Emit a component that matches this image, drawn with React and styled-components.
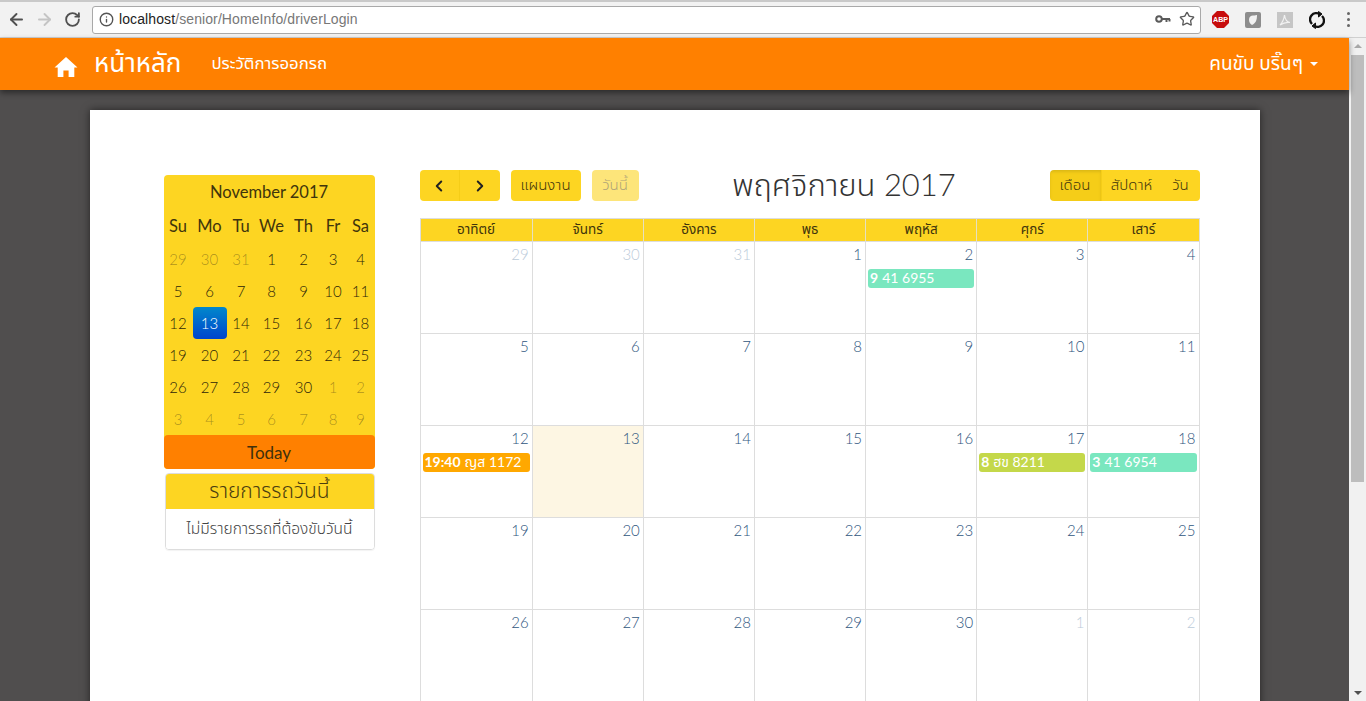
import React from 'react';
import styled, { createGlobalStyle } from 'styled-components';
import { ArrowLeft, ArrowRight, RotateCw, Info, Star, ChevronLeft, ChevronRight } from 'lucide-react';

const YELLOW = '#fdd522';
const ORANGE = '#ff8000';
const FONT = '"Lato", "Noto Sans", "Noto Sans Thai", "Open Sans", "Liberation Sans", sans-serif';

const Global = createGlobalStyle`
  html, body { margin: 0; padding: 0; height: 100%; overflow: hidden; }
  body { font-family: ${FONT}; background: #504e4e; }
  * { box-sizing: border-box; }
`;

const Shell = styled.div`
  display: flex;
  flex-direction: column;
  height: 701px;
  width: 1366px;
  overflow: hidden;
`;

const BrowserBar = styled.div`
  height: 38px;
  flex: none;
  background: #f2f2f2;
  border-top: 2px solid #c9c9c9;
  border-bottom: 1px solid #d0d0d0;
  display: flex;
  align-items: center;
  padding: 0 8px 0 6px;
`;

const NavIcons = styled.div`
  display: flex;
  align-items: center;
  gap: 8px;
  width: 86px;
  flex: none;
`;

const NavBtn = styled.span`
  display: flex;
  width: 20px;
  justify-content: center;
  color: ${p => (p.$off ? '#c4c4c4' : '#505050')};
`;

const Omnibox = styled.div`
  width: 1109px;
  height: 28px;
  background: #fff;
  border: 1px solid #a9a9a9;
  border-radius: 3px;
  display: flex;
  align-items: center;
  padding: 0 5px 1px 6px;
  font: 14px "Liberation Sans", sans-serif;
  letter-spacing: 0.1px;
  color: #777;
`;

const UrlHost = styled.span`
  color: #222;
  margin-left: 5px;
`;

const OmniEnd = styled.div`
  margin-left: auto;
  display: flex;
  align-items: center;
  gap: 8px;
  color: #5a5a5a;
`;

const Extensions = styled.div`
  display: flex;
  align-items: center;
  margin-left: 11px;
  gap: 16px;
`;

const Dots = styled.div`
  display: flex;
  flex-direction: column;
  gap: 3px;
  margin-left: 22px;
  span { width: 3px; height: 3px; background: #666; border-radius: 50%; }
`;

const Viewport = styled.div`
  flex: 1;
  min-height: 0;
  display: flex;
`;

const Page = styled.div`
  flex: 1;
  min-width: 0;
  display: flex;
  flex-direction: column;
  background: #504e4e;
`;

const Navbar = styled.nav`
  height: 52px;
  flex: none;
  background: ${ORANGE};
  color: #fff;
  display: flex;
  align-items: center;
  padding: 0 31px 0 54px;
  box-shadow: 0 3px 6px rgba(0, 0, 0, 0.45);
  position: relative;
  z-index: 2;
`;

const Brand = styled.a`
  display: flex;
  align-items: center;
  font-size: 26px;
  gap: 16px;
  svg { margin-top: 6px; }
`;

const NavLink = styled.a`
  font-size: 16.8px;
  margin-left: 30px;
`;

const UserMenu = styled.a`
  margin-left: auto;
  font-size: 19px;
  display: flex;
  align-items: center;
  gap: 7px;
`;

const Caret = styled.span`
  width: 0;
  height: 0;
  border-left: 4px solid transparent;
  border-right: 4px solid transparent;
  border-top: 4px solid #fff;
`;

const Main = styled.main`
  flex: 1;
  min-height: 0;
  padding-top: 20px;
  display: flex;
  justify-content: center;
  align-items: flex-start;
`;

const Card = styled.div`
  width: 1170px;
  height: 640px;
  flex: none;
  background: #fff;
  box-shadow: 0 0 8px rgba(0, 0, 0, 0.55);
  display: flex;
  align-items: flex-start;
  padding: 60px 0 0 74px;
`;

const Sidebar = styled.aside`
  width: 211px;
  flex: none;
  margin-top: 5px;
`;

const Mini = styled.div`
  background: ${YELLOW};
  border-radius: 4px;
  color: #40340c;
`;

const MiniTitle = styled.div`
  height: 33px;
  display: flex;
  align-items: center;
  justify-content: center;
  font-size: 16.5px;
  font-weight: 400;
`;

const MiniGrid = styled.div`
  display: grid;
  grid-template-columns: 29px 34px 29px 32px 32px 27px 28px;
  grid-template-rows: 35px;
  grid-auto-rows: 32px;
`;

const Dow = styled.div`
  display: flex;
  align-items: center;
  justify-content: center;
  font-size: 16.5px;
`;

const MiniDay = styled.div`
  display: flex;
  align-items: center;
  justify-content: center;
  font-size: 15px;
  font-weight: 300;
  border-radius: 4px;
  color: ${p => (p.$active ? '#fff' : p.$muted ? 'rgba(50,42,20,0.42)' : '#2e2608')};
  background: ${p => (p.$active ? 'linear-gradient(#0088cc, #0044cc)' : 'transparent')};
`;

const TodayBar = styled.div`
  height: 34px;
  background: ${ORANGE};
  border-radius: 4px;
  display: flex;
  align-items: center;
  justify-content: center;
  font-size: 17px;
  font-weight: 400;
  color: #40300c;
`;

const Panel = styled.div`
  margin: 4px 0 0 1px;
  border: 1px solid #ddd;
  border-radius: 4px;
  overflow: hidden;
  box-shadow: 0 1px 1px rgba(0, 0, 0, 0.05);
`;

const PanelHead = styled.div`
  height: 35px;
  background: ${YELLOW};
  display: flex;
  align-items: center;
  justify-content: center;
  font-size: 21px;
  font-weight: 300;
  color: #4a3d10;
`;

const PanelBody = styled.div`
  height: 40px;
  background: #fff;
  display: flex;
  align-items: center;
  justify-content: center;
  font-size: 15.5px;
  font-weight: 300;
  color: #444;
`;

const Calendar = styled.section`
  width: 780px;
  flex: none;
  margin-left: 45px;
`;

const Toolbar = styled.div`
  height: 31px;
  display: flex;
  align-items: center;
  margin-bottom: 17px;
  position: relative;
`;

const BtnGroup = styled.div`
  display: flex;
  height: 31px;
  border-radius: 4px;
  overflow: hidden;
  margin-right: ${p => p.$mr || 0}px;
`;

const Btn = styled.button`
  height: 31px;
  width: ${p => p.$w}px;
  border: 0;
  padding: 0;
  font: 300 15px ${FONT};
  color: #40340c;
  background: ${p => (p.$on ? '#f5cd18' : YELLOW)};
  box-shadow: ${p => (p.$on ? 'inset 0 2px 3px rgba(0,0,0,.1)' : 'none')};
  display: flex;
  align-items: center;
  justify-content: center;
  border-left: ${p => (p.$split ? '1px solid #f5cd18' : '0')};
`;

const FadedBtn = styled(Btn)`
  opacity: 0.6;
  border-radius: 4px;
  color: #776520;
`;

const SoloBtn = styled(Btn)`
  border-radius: 4px;
  margin-right: 11px;
`;

const Title = styled.h2`
  flex: 1;
  margin: 0;
  padding-top: 2px;
  text-align: center;
  font-weight: 300;
  font-size: 31px;
  color: #333;
`;

const HeadRow = styled.div`
  display: grid;
  grid-template-columns: repeat(7, 1fr);
  height: 24px;
  background: ${YELLOW};
  border: 1px solid #ddd;
  border-bottom: 1px solid #ddd;
`;

const HeadCell = styled.div`
  display: flex;
  align-items: center;
  justify-content: center;
  font-size: 13.5px;
  color: #40340c;
  border-left: ${p => (p.$first ? '0' : '1px solid #e6e0c0')};
`;

const Weeks = styled.div`
  display: grid;
  grid-template-columns: repeat(7, 1fr);
  grid-auto-rows: 92px;
  border-left: 1px solid #ddd;
  border-right: 1px solid #ddd;
`;

const DayCell = styled.div`
  border-bottom: 1px solid #ddd;
  border-left: ${p => (p.$first ? '0' : '1px solid #ddd')};
  background: ${p => (p.$today ? '#fdf6e3' : '#fff')};
  padding: 2px 2px 0 2px;
`;

const DayNum = styled.div`
  text-align: right;
  font-size: 15px;
  font-weight: 300;
  line-height: 20px;
  padding-right: 1px;
  color: ${p => (p.$muted ? '#bccbda' : '#2f5680')};
`;

const EventChip = styled.div`
  margin-top: 5px;
  height: 19px;
  border-radius: 3px;
  background: ${p => p.$bg};
  color: #fff;
  font-size: 14px;
  font-weight: 400;
  line-height: 18px;
  padding-left: 2px;
  white-space: nowrap;
  overflow: hidden;
  b { font-weight: 700; margin-right: 4px; }
`;

const Scrollbar = styled.div`
  width: 17px;
  flex: none;
  background: #f1f1f1;
  display: flex;
  flex-direction: column;
  align-items: center;
  justify-content: space-between;
  position: relative;
`;

const ScrollArrow = styled.span`
  width: 0;
  height: 0;
  margin: 6px 0;
  border-left: 4px solid transparent;
  border-right: 4px solid transparent;
  ${p => (p.$up ? 'border-bottom: 4px solid #a8a8a8;' : 'border-top: 4px solid #505050;')}
`;

const Thumb = styled.div`
  position: absolute;
  top: 17px;
  left: 2px;
  right: 2px;
  height: 427px;
  background: #bdbdbd;
`;

const Home = () => (
  <svg width="24" height="22" viewBox="0 0 24 22" fill="#fff">
    <path d="M12 1 L23.5 11.5 L20.3 11.5 L20.3 21 L14.6 21 L14.6 14.5 L9.4 14.5 L9.4 21 L3.7 21 L3.7 11.5 L.5 11.5 Z" />
  </svg>
);

const KeyIcon = () => (
  <svg width="16" height="10" viewBox="0 0 16 10" fill="none" stroke="#5a5a5a" strokeWidth="2">
    <circle cx="4" cy="5" r="2.8" />
    <path d="M7 5 H15 M11.5 5 V8 M14.5 5 V7.5" />
  </svg>
);

const Abp = () => (
  <svg width="17" height="17" viewBox="0 0 18 18">
    <path d="M5.3 0 H12.7 L18 5.3 V12.7 L12.7 18 H5.3 L0 12.7 V5.3 Z" fill="#c70d0d" />
    <text x="9" y="11.6" textAnchor="middle" fontSize="7.5" fontWeight="700" fontFamily="Liberation Sans" fill="#fff">ABP</text>
  </svg>
);

const Shield = () => (
  <svg width="16" height="16" viewBox="0 0 16 16">
    <rect width="16" height="16" rx="2" fill="#8d8d8d" />
    <path d="M8 3.5 C10 3.5 12 3 12 3 C12 8 11 11 7 13 C5 12 4 10 4 7.5 C4 5 6 3.5 8 3.5 Z" fill="#f2f2f2" />
  </svg>
);

const Pdf = () => (
  <svg width="16" height="16" viewBox="0 0 16 16">
    <rect width="16" height="16" fill="#c6c6c6" />
    <path d="M3 13 C5 11 7 7 7.5 3 C8 7 10 10 13 10.5 C10 10 6 11 3 13 Z" fill="none" stroke="#f2f2f2" strokeWidth="1.2" />
  </svg>
);

const Sync = () => (
  <svg width="16" height="18" viewBox="0 0 16 18" fill="none" stroke="#111" strokeWidth="2.4">
    <path d="M3 13 A6.3 6.3 0 0 1 11 3.3" />
    <path d="M13 5 A6.3 6.3 0 0 1 5 14.7" />
    <path d="M9.5 0.5 L13 3 L9.5 6 Z" fill="#111" strokeWidth="1" />
    <path d="M6.5 17.5 L3 15 L6.5 12 Z" fill="#111" strokeWidth="1" />
  </svg>
);

const dows = ['Su', 'Mo', 'Tu', 'We', 'Th', 'Fr', 'Sa'];
const miniDays = [29, 30, 31, ...Array.from({ length: 30 }, (_, i) => i + 1), 1, 2, 3, 4, 5, 6, 7, 8, 9];
const thaiDays = ['อาทิตย์', 'จันทร์', 'อังคาร', 'พุธ', 'พฤหัส', 'ศุกร์', 'เสาร์'];
const events = {
  2: { bg: '#7ae7bf', lead: '9', rest: '41 6955' },
  12: { bg: '#ffa800', lead: '19:40', rest: 'ญส 1172' },
  17: { bg: '#c4d84a', lead: '8', rest: 'ฮข 8211' },
  18: { bg: '#7ae7bf', lead: '3', rest: '41 6954' },
};
const monthDays = [29, 30, 31, ...Array.from({ length: 30 }, (_, i) => i + 1), 1, 2];

export default function App() {
  return (
    <Shell>
      <Global />
      <BrowserBar>
        <NavIcons>
          <NavBtn><ArrowLeft size={19} strokeWidth={2.4} /></NavBtn>
          <NavBtn $off><ArrowRight size={19} strokeWidth={2.4} /></NavBtn>
          <NavBtn><RotateCw size={17} strokeWidth={2.6} /></NavBtn>
        </NavIcons>
        <Omnibox>
          <Info size={15} color="#555" strokeWidth={2.2} />
          <UrlHost>localhost</UrlHost>/senior/HomeInfo/driverLogin
          <OmniEnd>
            <KeyIcon />
            <Star size={16} strokeWidth={2} />
          </OmniEnd>
        </Omnibox>
        <Extensions>
          <Abp />
          <Shield />
          <Pdf />
          <Sync />
        </Extensions>
        <Dots><span /><span /><span /></Dots>
      </BrowserBar>
      <Viewport>
        <Page>
          <Navbar>
            <Brand><Home />หน้าหลัก</Brand>
            <NavLink>ประวัติการออกรถ</NavLink>
            <UserMenu>คนขับ บริ๊นๆ <Caret /></UserMenu>
          </Navbar>
          <Main>
            <Card>
              <Sidebar>
                <Mini>
                  <MiniTitle>November 2017</MiniTitle>
                  <MiniGrid>
                    {dows.map(d => <Dow key={d}>{d}</Dow>)}
                    {miniDays.map((d, i) => (
                      <MiniDay key={i} $active={i === 15} $muted={i < 3 || i > 32}>{d}</MiniDay>
                    ))}
                  </MiniGrid>
                  <TodayBar>Today</TodayBar>
                </Mini>
                <Panel>
                  <PanelHead>รายการรถวันนี้</PanelHead>
                  <PanelBody>ไม่มีรายการรถที่ต้องขับวันนี้</PanelBody>
                </Panel>
              </Sidebar>
              <Calendar>
                <Toolbar>
                  <BtnGroup $mr={11}>
                    <Btn $w={39}><ChevronLeft size={18} strokeWidth={2.6} color="#222" /></Btn>
                    <Btn $w={41} $split><ChevronRight size={18} strokeWidth={2.6} color="#222" /></Btn>
                  </BtnGroup>
                  <SoloBtn $w={70}>แผนงาน</SoloBtn>
                  <FadedBtn $w={47}>วันนี้</FadedBtn>
                  <Title>พฤศจิกายน 2017</Title>
                  <BtnGroup>
                    <Btn $w={51} $on>เดือน</Btn>
                    <Btn $w={61} $split>สัปดาห์</Btn>
                    <Btn $w={38}>วัน</Btn>
                  </BtnGroup>
                </Toolbar>
                <HeadRow>
                  {thaiDays.map((d, i) => <HeadCell key={d} $first={i === 0}>{d}</HeadCell>)}
                </HeadRow>
                <Weeks>
                  {monthDays.map((d, i) => {
                    const muted = i < 3 || i > 32;
                    const ev = !muted && events[d];
                    return (
                      <DayCell key={i} $first={i % 7 === 0} $today={!muted && d === 13}>
                        <DayNum $muted={muted}>{d}</DayNum>
                        {ev && <EventChip $bg={ev.bg}><b>{ev.lead}</b>{ev.rest}</EventChip>}
                      </DayCell>
                    );
                  })}
                </Weeks>
              </Calendar>
            </Card>
          </Main>
        </Page>
        <Scrollbar>
          <ScrollArrow $up />
          <Thumb />
          <ScrollArrow />
        </Scrollbar>
      </Viewport>
    </Shell>
  );
}
